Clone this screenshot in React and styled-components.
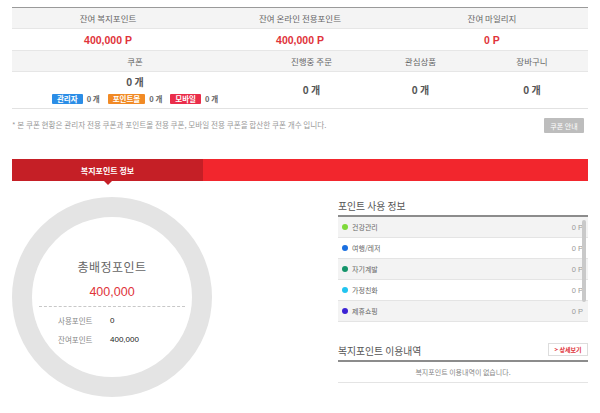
import React from 'react';
import styled, { createGlobalStyle } from 'styled-components';

const GlobalStyle = createGlobalStyle`
  html, body {
    margin: 0;
    padding: 0;
    background: #fff;
  }
  body {
    font-family: "Noto Sans CJK KR", "Noto Sans", sans-serif;
    color: #555;
  }
`;

const Page = styled.div`
  width: 576px;
  padding: 7px 12px 0;
`;

const Table = styled.div`
  border-top: 1px solid #9a9a9a;
  border-bottom: 1px solid #e2e2e2;
`;

const Row = styled.div`
  display: grid;
  grid-template-columns: ${(p) => p.cols};
`;

const HeadCell = styled.div`
  height: 20px;
  background: #f4f4f4;
  border-bottom: 1px solid #e6e6e6;
  display: flex;
  align-items: center;
  justify-content: center;
  font-size: 8.5px;
  color: #666;
`;

const PointCell = styled.div`
  height: 21px;
  border-bottom: 1px solid #e6e6e6;
  display: flex;
  align-items: center;
  justify-content: center;
  font-family: "Liberation Sans", "Noto Sans CJK KR", sans-serif;
  font-weight: bold;
  font-size: 10.5px;
  color: #e0333a;
`;

const CountCell = styled.div`
  height: 36px;
  display: flex;
  flex-direction: column;
  align-items: center;
  justify-content: center;
  gap: 5px;
`;

const Count = styled.div`
  font-size: 10px;
  font-weight: bold;
  color: #555;
  line-height: 12px;
`;

const BadgeRow = styled.div`
  display: flex;
  align-items: center;
  gap: 8px;
`;

const BadgeItem = styled.div`
  display: flex;
  align-items: center;
  gap: 4px;
  font-size: 7.5px;
  font-weight: bold;
  color: #666;
`;

const Badge = styled.span`
  display: inline-block;
  background: ${(p) => p.color};
  color: #fff;
  font-size: 7.5px;
  line-height: 10px;
  padding: 0 5px;
  text-align: center;
  border-radius: 1px;
`;

const NoteRow = styled.div`
  display: flex;
  justify-content: space-between;
  align-items: flex-start;
  padding: 9px 4px 0 0;
  height: 41px;
`;

const Note = styled.p`
  margin: 1px 0 0;
  font-size: 7.6px;
  color: #999;
`;

const GreyButton = styled.button`
  border: none;
  background: #bdbdbd;
  color: #fff;
  font-family: inherit;
  font-size: 7px;
  height: 15px;
  width: 40px;
  padding: 0;
  border-radius: 1px;
`;

const TabBar = styled.div`
  display: flex;
  height: 22px;
  background: #f2262d;
`;

const Tab = styled.div`
  position: relative;
  width: 191px;
  background: #c51f26;
  color: #fff;
  font-size: 8px;
  font-weight: bold;
  display: flex;
  align-items: center;
  justify-content: center;

  &::after {
    content: '';
    position: absolute;
    left: 50%;
    bottom: -4px;
    margin-left: -4px;
    border-left: 4px solid transparent;
    border-right: 4px solid transparent;
    border-top: 4px solid #c51f26;
  }
`;

const Body = styled.div`
  display: flex;
  justify-content: space-between;
  padding-top: 16px;
`;

const Ring = styled.div`
  width: 160px;
  height: 120px;
  padding-top: 40px;
  border: 20px solid #e4e4e4;
  border-radius: 50%;
  display: flex;
  flex-direction: column;
  align-items: center;
`;

const RingTitle = styled.div`
  font-size: 12px;
  line-height: 20px;
  color: #666;
  letter-spacing: 0.5px;
`;

const RingAmount = styled.div`
  margin-top: 6px;
  font-family: "Liberation Sans", sans-serif;
  font-size: 12.5px;
  line-height: 18px;
  color: #e0333a;
`;

const Dashed = styled.div`
  width: 146px;
  margin-top: 5px;
  border-top: 1px dashed #c8c8c8;
`;

const StatList = styled.div`
  align-self: flex-start;
  margin: 4px 0 0 26px;
`;

const StatRow = styled.div`
  display: flex;
  align-items: center;
  height: 19px;
`;

const StatLabel = styled.span`
  width: 52px;
  font-size: 7.5px;
  color: #888;
`;

const StatValue = styled.span`
  font-family: "Liberation Sans", sans-serif;
  font-size: 8px;
  color: #222;
`;

const Side = styled.div`
  width: 250px;
`;

const SectionHead = styled.div`
  display: flex;
  align-items: center;
  justify-content: space-between;
  height: 18px;
  border-bottom: 2px solid #8c8c8c;
  margin-top: ${(p) => p.top || 0}px;
`;

const SectionTitle = styled.h3`
  margin: 0;
  font-size: 9.8px;
  font-weight: normal;
  color: #555;
`;

const List = styled.div`
  position: relative;
`;

const Thumb = styled.div`
  position: absolute;
  top: 3px;
  right: 2px;
  width: 4px;
  height: 82px;
  border-radius: 2px;
  background: #c9c9c9;
`;

const ListRow = styled.div`
  display: flex;
  align-items: center;
  justify-content: space-between;
  height: 20px;
  border-bottom: 1px solid #e4e4e4;
  background: ${(p) => (p.odd ? '#f3f3f3' : '#fff')};
  padding: 0 5px 0 4px;
`;

const Category = styled.span`
  display: flex;
  align-items: center;
  gap: 4px;
  font-size: 7px;
  color: #666;
`;

const Dot = styled.span`
  width: 6px;
  height: 6px;
  border-radius: 50%;
  background: ${(p) => p.color};
`;

const Zero = styled.span`
  font-family: "Liberation Sans", sans-serif;
  font-size: 7.5px;
  color: #999;
`;

const MoreButton = styled.button`
  background: #fff;
  border: 1px solid #ddd;
  color: #e0333a;
  font-family: inherit;
  font-size: 6px;
  font-weight: bold;
  height: 13px;
  width: 40px;
  padding: 0;
  margin-bottom: 4px;
`;

const Empty = styled.div`
  height: 20px;
  border-bottom: 1px solid #e4e4e4;
  display: flex;
  align-items: center;
  justify-content: center;
  font-size: 7px;
  color: #888;
`;

const points = [
  { label: '잔여 복지포인트', value: '400,000 P' },
  { label: '잔여 온라인 전용포인트', value: '400,000 P' },
  { label: '잔여 마일리지', value: '0 P' },
];

const badges = [
  { name: '관리자', color: '#2b8de6' },
  { name: '포인트몰', color: '#f18a25' },
  { name: '모바일', color: '#ea2d4a' },
];

const categories = [
  { name: '건강관리', color: '#7ed93a' },
  { name: '여행/레저', color: '#1a6fe0' },
  { name: '자기계발', color: '#14946a' },
  { name: '가정친화', color: '#22c4f0' },
  { name: '제휴쇼핑', color: '#3b22d4' },
];

export default function App() {
  return (
    <>
      <GlobalStyle />
      <Page>
        <Table>
          <Row cols="1fr 1fr 1fr">
            {points.map((p) => (
              <HeadCell key={p.label}>{p.label}</HeadCell>
            ))}
            {points.map((p) => (
              <PointCell key={p.label}>{p.value}</PointCell>
            ))}
          </Row>
          <Row cols="246px 107px 111px 112px">
            <HeadCell>쿠폰</HeadCell>
            <HeadCell>진행중 주문</HeadCell>
            <HeadCell>관심상품</HeadCell>
            <HeadCell>장바구니</HeadCell>
            <CountCell>
              <Count>0 개</Count>
              <BadgeRow>
                {badges.map((b) => (
                  <BadgeItem key={b.name}>
                    <Badge color={b.color}>{b.name}</Badge>0 개
                  </BadgeItem>
                ))}
              </BadgeRow>
            </CountCell>
            <CountCell><Count>0 개</Count></CountCell>
            <CountCell><Count>0 개</Count></CountCell>
            <CountCell><Count>0 개</Count></CountCell>
          </Row>
        </Table>

        <NoteRow>
          <Note>* 본 쿠폰 현황은 관리자 전용 쿠폰과 포인트몰 전용 쿠폰, 모바일 전용 쿠폰을 합산한 쿠폰 개수 입니다.</Note>
          <GreyButton>쿠폰 안내</GreyButton>
        </NoteRow>

        <TabBar>
          <Tab>복지포인트 정보</Tab>
        </TabBar>

        <Body>
          <Ring>
            <RingTitle>총배정포인트</RingTitle>
            <RingAmount>400,000</RingAmount>
            <Dashed />
            <StatList>
              <StatRow>
                <StatLabel>사용포인트</StatLabel>
                <StatValue>0</StatValue>
              </StatRow>
              <StatRow>
                <StatLabel>잔여포인트</StatLabel>
                <StatValue>400,000</StatValue>
              </StatRow>
            </StatList>
          </Ring>

          <Side>
            <SectionHead>
              <SectionTitle>포인트 사용 정보</SectionTitle>
            </SectionHead>
            <List>
              {categories.map((c, i) => (
                <ListRow key={c.name} odd={i % 2 === 0}>
                  <Category>
                    <Dot color={c.color} />
                    {c.name}
                  </Category>
                  <Zero>0 P</Zero>
                </ListRow>
              ))}
              <Thumb />
            </List>

            <SectionHead top={20}>
              <SectionTitle>복지포인트 이용내역</SectionTitle>
              <MoreButton>&gt; 상세보기</MoreButton>
            </SectionHead>
            <Empty>복지포인트 이용내역이 없습니다.</Empty>
          </Side>
        </Body>
      </Page>
    </>
  );
}
